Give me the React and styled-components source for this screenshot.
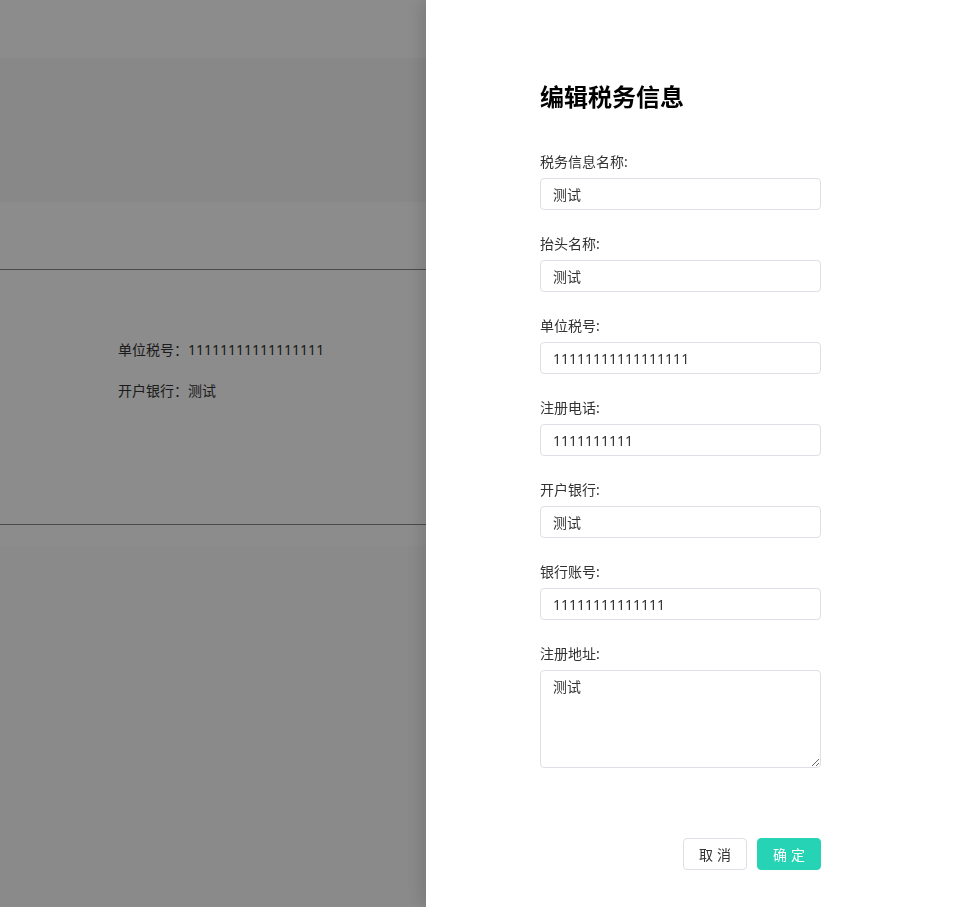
import React from "react";
import styled, { createGlobalStyle } from "styled-components";

const Global = createGlobalStyle`
  html, body { margin: 0; padding: 0; background: #fff; }
  body {
    font-family: "Noto Sans", "Noto Sans CJK SC", sans-serif;
    font-size: 14px;
    color: #333;
  }
  * { box-sizing: border-box; }
`;

const Page = styled.div`
  display: flex;
  flex-direction: column;
  min-height: 907px;
`;

const Band = styled.div`
  height: ${(p) => p.$h}px;
  background: ${(p) => p.$bg || "#fff"};
  border-bottom: ${(p) => (p.$line ? "1px solid #888" : "none")};
`;

const InfoSection = styled.section`
  height: 255px;
  border-bottom: 1px solid #888;
  padding: 70px 0 0 118px;
  display: flex;
  flex-direction: column;
  gap: 21px;
`;

const InfoRow = styled.div`
  line-height: 20px;
  color: #333;
`;

const Overlay = styled.div`
  position: fixed;
  inset: 0;
  background: rgba(0, 0, 0, 0.45);
`;

const Drawer = styled.aside`
  position: fixed;
  top: 0;
  right: 0;
  bottom: 0;
  width: 548px;
  background: #fff;
  box-shadow: -6px 0 16px rgba(0, 0, 0, 0.12);
  padding: 81px 0 0 114px;
  display: flex;
  flex-direction: column;
`;

const Title = styled.h2`
  margin: 0 0 39px;
  font-size: 24px;
  line-height: 32px;
  font-weight: 700;
  color: #000;
`;

const Form = styled.form`
  width: 281px;
  display: flex;
  flex-direction: column;
`;

const Field = styled.div`
  display: flex;
  flex-direction: column;
  margin-bottom: 24px;
`;

const Label = styled.label`
  line-height: 20px;
  margin-bottom: 6px;
  color: #333;
`;

const Input = styled.input`
  height: 32px;
  width: 100%;
  border: 1px solid #dcdfe6;
  border-radius: 4px;
  padding: 0 12px;
  font: inherit;
  font-size: 14px;
  color: #333;
  outline: none;
`;

const TextArea = styled.textarea`
  height: 98px;
  width: 100%;
  border: 1px solid #dcdfe6;
  border-radius: 4px;
  padding: 6px 12px;
  font: inherit;
  font-size: 14px;
  line-height: 20px;
  color: #333;
  outline: none;
`;

const Footer = styled.div`
  margin-top: 46px;
  display: flex;
  justify-content: flex-end;
  gap: 10px;
`;

const Button = styled.button`
  width: 64px;
  height: 32px;
  border-radius: 4px;
  font: inherit;
  font-size: 14px;
  letter-spacing: 4px;
  text-indent: 4px;
  cursor: pointer;
  border: 1px solid ${(p) => (p.$primary ? "#26d4b5" : "#dcdfe6")};
  background: ${(p) => (p.$primary ? "#26d4b5" : "#fff")};
  color: ${(p) => (p.$primary ? "#fff" : "#333")};
`;

const fields = [
  { label: "税务信息名称:", value: "测试" },
  { label: "抬头名称:", value: "测试" },
  { label: "单位税号:", value: "11111111111111111" },
  { label: "注册电话:", value: "1111111111" },
  { label: "开户银行:", value: "测试" },
  { label: "银行账号:", value: "11111111111111" },
];

export default function App() {
  return (
    <>
      <Global />
      <Page>
        <Band $h={58} />
        <Band $h={144} $bg="#f7f7f7" />
        <Band $h={68} $line />
        <InfoSection>
          <InfoRow>单位税号：11111111111111111</InfoRow>
          <InfoRow>开户银行：测试</InfoRow>
        </InfoSection>
        <Band $h={21} />
        <Band $h={360} $bg="#fbfbfb" />
      </Page>
      <Overlay />
      <Drawer>
        <Title>编辑税务信息</Title>
        <Form onSubmit={(e) => e.preventDefault()}>
          {fields.map((f) => (
            <Field key={f.label}>
              <Label>{f.label}</Label>
              <Input defaultValue={f.value} />
            </Field>
          ))}
          <Field>
            <Label>注册地址:</Label>
            <TextArea defaultValue="测试" />
          </Field>
          <Footer>
            <Button type="button">取消</Button>
            <Button type="submit" $primary>确定</Button>
          </Footer>
        </Form>
      </Drawer>
    </>
  );
}
